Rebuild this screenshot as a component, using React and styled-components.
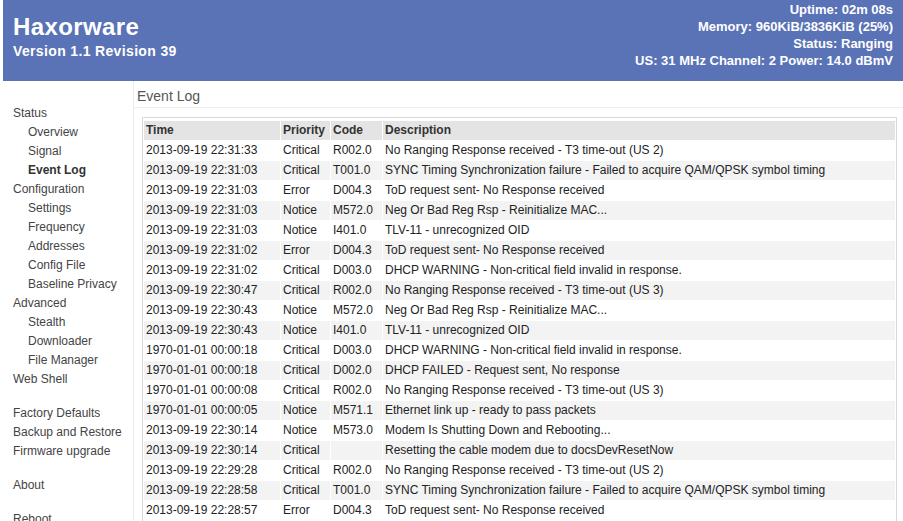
import React from "react";
import styled, { createGlobalStyle } from "styled-components";

const GlobalStyle = createGlobalStyle`
  html, body {
    margin: 0;
    padding: 0;
    background: #fff;
    font-family: "Liberation Sans", Arial, sans-serif;
    font-size: 12px;
    color: #222;
  }
`;

const Page = styled.div`
  padding-left: 3px;
`;

const Header = styled.div`
  display: flex;
  justify-content: space-between;
  align-items: flex-start;
  height: 79px;
  background: #5a72b6;
  border-bottom: 2px dotted #5a72b6;
  color: #fff;
  font-weight: bold;
`;

const Brand = styled.div`
  padding: 13px 0 0 10px;
`;

const Title = styled.div`
  font-size: 24px;
  line-height: 28px;
  letter-spacing: 0.4px;
`;

const Version = styled.div`
  font-size: 14px;
  line-height: 20px;
  letter-spacing: 0.35px;
`;

const Stats = styled.div`
  padding: 1px 10px 0 0;
  text-align: right;
  font-size: 13px;
  line-height: 17px;
`;

const Body = styled.div`
  display: flex;
  align-items: stretch;
`;

const Sidebar = styled.nav`
  width: 120px;
  flex: none;
  padding: 23px 0 0 10px;
  border-right: 1px solid #ececec;
  min-height: 460px;
`;

const NavItem = styled.div`
  line-height: 19px;
  padding-left: ${(p) => (p.$sub ? "15px" : "0")};
  margin-top: ${(p) => (p.$gap ? "15px" : "0")};
  color: ${(p) => (p.$active ? "#333" : "#444")};
  font-weight: ${(p) => (p.$active ? "bold" : "normal")};
  white-space: nowrap;
`;

const Content = styled.main`
  flex: 1;
  min-width: 0;
  padding-top: 6px;
`;

const Heading = styled.h1`
  margin: 0;
  padding: 0 0 2px 3px;
  font-size: 14px;
  line-height: 18px;
  font-weight: normal;
  color: #555;
  border-bottom: 1px solid #eeeeee;
`;

const TableBox = styled.div`
  margin: 9px 6px 0 8px;
  padding-top: 2px;
  border: 1px solid #d8d8d8;
  border-bottom-color: #c5cde0;
`;

const Table = styled.table`
  width: 100%;
  border-collapse: separate;
  border-spacing: 1px;
  font-size: 12px;
`;

const Th = styled.th`
  text-align: left;
  font-weight: bold;
  color: #333;
  background: #e4e4e4;
  padding: 2px 3px 2px 2px;
  line-height: 15px;
  width: ${(p) => p.$w || "auto"};
`;

const Row = styled.tr`
  background: ${(p) => (p.$alt ? "#f3f3f3" : "#fff")};
`;

const Td = styled.td`
  padding: 2px 3px 2px 2px;
  line-height: 15px;
  color: #222;
  white-space: nowrap;
`;

const nav = [
  { label: "Status" },
  { label: "Overview", sub: true },
  { label: "Signal", sub: true },
  { label: "Event Log", sub: true, active: true },
  { label: "Configuration" },
  { label: "Settings", sub: true },
  { label: "Frequency", sub: true },
  { label: "Addresses", sub: true },
  { label: "Config File", sub: true },
  { label: "Baseline Privacy", sub: true },
  { label: "Advanced" },
  { label: "Stealth", sub: true },
  { label: "Downloader", sub: true },
  { label: "File Manager", sub: true },
  { label: "Web Shell" },
  { label: "Factory Defaults", gap: true },
  { label: "Backup and Restore" },
  { label: "Firmware upgrade" },
  { label: "About", gap: true },
  { label: "Reboot", gap: true },
];

const events = [
  ["2013-09-19 22:31:33", "Critical", "R002.0", "No Ranging Response received - T3 time-out (US 2)"],
  ["2013-09-19 22:31:03", "Critical", "T001.0", "SYNC Timing Synchronization failure - Failed to acquire QAM/QPSK symbol timing"],
  ["2013-09-19 22:31:03", "Error", "D004.3", "ToD request sent- No Response received"],
  ["2013-09-19 22:31:03", "Notice", "M572.0", "Neg Or Bad Reg Rsp - Reinitialize MAC..."],
  ["2013-09-19 22:31:03", "Notice", "I401.0", "TLV-11 - unrecognized OID"],
  ["2013-09-19 22:31:02", "Error", "D004.3", "ToD request sent- No Response received"],
  ["2013-09-19 22:31:02", "Critical", "D003.0", "DHCP WARNING - Non-critical field invalid in response."],
  ["2013-09-19 22:30:47", "Critical", "R002.0", "No Ranging Response received - T3 time-out (US 3)"],
  ["2013-09-19 22:30:43", "Notice", "M572.0", "Neg Or Bad Reg Rsp - Reinitialize MAC..."],
  ["2013-09-19 22:30:43", "Notice", "I401.0", "TLV-11 - unrecognized OID"],
  ["1970-01-01 00:00:18", "Critical", "D003.0", "DHCP WARNING - Non-critical field invalid in response."],
  ["1970-01-01 00:00:18", "Critical", "D002.0", "DHCP FAILED - Request sent, No response"],
  ["1970-01-01 00:00:08", "Critical", "R002.0", "No Ranging Response received - T3 time-out (US 3)"],
  ["1970-01-01 00:00:05", "Notice", "M571.1", "Ethernet link up - ready to pass packets"],
  ["2013-09-19 22:30:14", "Notice", "M573.0", "Modem Is Shutting Down and Rebooting..."],
  ["2013-09-19 22:30:14", "Critical", "", "Resetting the cable modem due to docsDevResetNow"],
  ["2013-09-19 22:29:28", "Critical", "R002.0", "No Ranging Response received - T3 time-out (US 2)"],
  ["2013-09-19 22:28:58", "Critical", "T001.0", "SYNC Timing Synchronization failure - Failed to acquire QAM/QPSK symbol timing"],
  ["2013-09-19 22:28:57", "Error", "D004.3", "ToD request sent- No Response received"],
];

export default function App() {
  return (
    <Page>
      <GlobalStyle />
      <Header>
        <Brand>
          <Title>Haxorware</Title>
          <Version>Version 1.1 Revision 39</Version>
        </Brand>
        <Stats>
          <div>Uptime: 02m 08s</div>
          <div>Memory: 960KiB/3836KiB (25%)</div>
          <div>Status: Ranging</div>
          <div>US: 31 MHz Channel: 2 Power: 14.0 dBmV</div>
        </Stats>
      </Header>
      <Body>
        <Sidebar>
          {nav.map((n) => (
            <NavItem key={n.label} $sub={n.sub} $gap={n.gap} $active={n.active}>
              {n.label}
            </NavItem>
          ))}
        </Sidebar>
        <Content>
          <Heading>Event Log</Heading>
          <TableBox>
            <Table>
              <thead>
                <tr>
                  <Th $w="131px">Time</Th>
                  <Th $w="44px">Priority</Th>
                  <Th $w="46px">Code</Th>
                  <Th>Description</Th>
                </tr>
              </thead>
              <tbody>
                {events.map(([time, prio, code, desc], i) => (
                  <Row key={i} $alt={i % 2 === 1}>
                    <Td>{time}</Td>
                    <Td>{prio}</Td>
                    <Td>{code}</Td>
                    <Td>{desc}</Td>
                  </Row>
                ))}
              </tbody>
            </Table>
          </TableBox>
        </Content>
      </Body>
    </Page>
  );
}
